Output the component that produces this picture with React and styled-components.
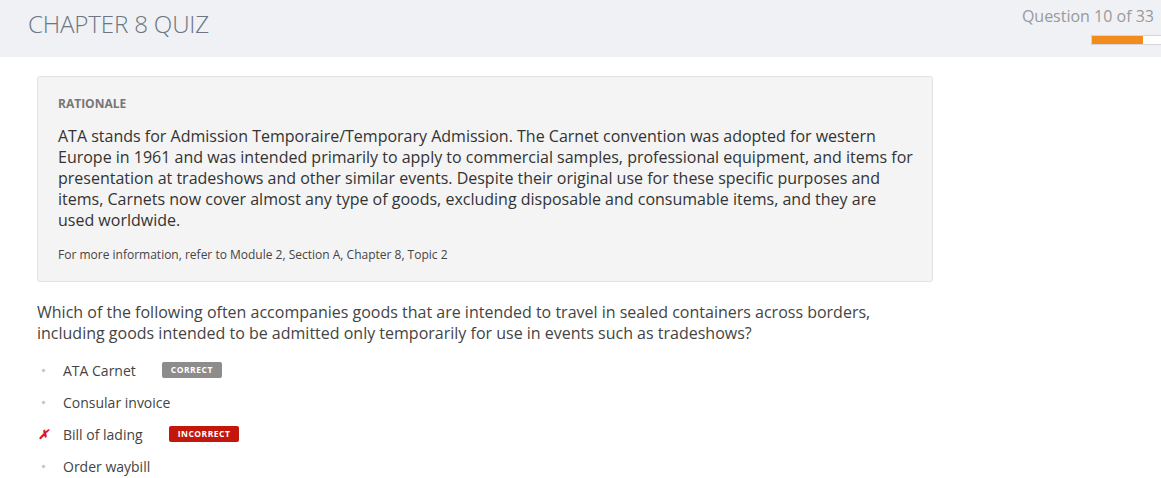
import React from 'react';
import styled, { createGlobalStyle } from 'styled-components';

const GlobalStyle = createGlobalStyle`
  body {
    margin: 0;
    background: #fff;
    font-family: "Open Sans", "Liberation Sans", sans-serif;
    color: #333;
  }
`;

const Header = styled.header`
  height: 57px;
  background: #eff1f5;
  display: flex;
  justify-content: space-between;
  align-items: flex-start;
  padding: 0 7px 0 28px;
  box-sizing: border-box;
`;

const Title = styled.h1`
  margin: 7px 0 0;
  font-size: 24.2px;
  font-weight: 300;
  color: #6c7582;
  letter-spacing: -0.2px;
`;

const Progress = styled.div`
  display: flex;
  flex-direction: column;
  align-items: flex-end;
  padding-top: 5px;
`;

const Counter = styled.div`
  font-size: 16px;
  color: #9a9a9a;
`;

const Bar = styled.div`
  margin-top: 8px;
  margin-right: -7px;
  width: 69px;
  height: 8px;
  background: #fff;
  border: 1px solid #d6d6d6;
  border-right: none;
`;

const Fill = styled.div`
  height: 100%;
  background: #f28c1e;
`;

const Main = styled.main`
  padding: 19px 37px;
  width: 896px;
`;

const Rationale = styled.section`
  background: #f4f4f4;
  border: 1px solid #e2e2e2;
  border-radius: 3px;
  padding: 18px 18px 18px 20px;
`;

const Label = styled.div`
  font-size: 12px;
  font-weight: 700;
  color: #777;
  margin-bottom: 14px;
`;

const Body = styled.p`
  margin: 0;
  font-size: 16px;
  line-height: 21px;
  color: #333;
`;

const Note = styled.p`
  margin: 15px 0 0;
  font-size: 12px;
  color: #444;
`;

const Question = styled.p`
  margin: 20px 0 10px;
  font-size: 16px;
  line-height: 21px;
  color: #444;
  padding-right: 20px;
`;

const Options = styled.ul`
  list-style: none;
  margin: 0;
  padding: 0;
`;

const Option = styled.li`
  display: flex;
  align-items: center;
  height: 32px;
  font-size: 14px;
  color: #444;
`;

const Marker = styled.span`
  width: 26px;
  display: flex;
  justify-content: flex-start;
  padding-left: 4px;
  box-sizing: border-box;
`;

const Dot = styled.span`
  width: 3px;
  height: 3px;
  margin-left: 1px;
  background: #c4c4c4;
  transform: rotate(45deg);
`;

const Cross = styled.span`
  color: #e0141e;
  font-size: 13px;
  font-weight: 700;
  font-style: italic;
  margin-left: -3px;
`;

const Badge = styled.span`
  margin-left: ${p => p.$gap}px;
  padding: 0 9px;
  height: 16px;
  line-height: 16px;
  font-size: 8.5px;
  font-weight: 700;
  letter-spacing: 0.5px;
  color: #fff;
  border-radius: 2px;
  background: ${p => (p.$wrong ? '#c4170b' : '#8c8c8c')};
`;

const options = [
  { text: 'ATA Carnet', badge: 'CORRECT', gap: 26 },
  { text: 'Consular invoice' },
  { text: 'Bill of lading', badge: 'INCORRECT', wrong: true, gap: 26 },
  { text: 'Order waybill' },
];

const App = () => (
  <>
    <GlobalStyle />
    <Header>
      <Title>CHAPTER 8 QUIZ</Title>
      <Progress>
        <Counter>Question 10 of 33</Counter>
        <Bar>
          <Fill style={{ width: `${(10 / 33) * 100 * 2.45}%` }} />
        </Bar>
      </Progress>
    </Header>
    <Main>
      <Rationale>
        <Label>RATIONALE</Label>
        <Body>
          ATA stands for Admission Temporaire/Temporary Admission. The Carnet convention was adopted for western
          Europe in 1961 and was intended primarily to apply to commercial samples, professional equipment, and items for
          presentation at tradeshows and other similar events. Despite their original use for these specific purposes and
          items, Carnets now cover almost any type of goods, excluding disposable and consumable items, and they are
          used worldwide.
        </Body>
        <Note>For more information, refer to Module 2, Section A, Chapter 8, Topic 2</Note>
      </Rationale>
      <Question>
        Which of the following often accompanies goods that are intended to travel in sealed containers across borders,
        including goods intended to be admitted only temporarily for use in events such as tradeshows?
      </Question>
      <Options>
        {options.map(o => (
          <Option key={o.text}>
            <Marker>{o.wrong ? <Cross>✗</Cross> : <Dot />}</Marker>
            {o.text}
            {o.badge && (
              <Badge $wrong={o.wrong} $gap={o.gap}>
                {o.badge}
              </Badge>
            )}
          </Option>
        ))}
      </Options>
    </Main>
  </>
);

export default App;
